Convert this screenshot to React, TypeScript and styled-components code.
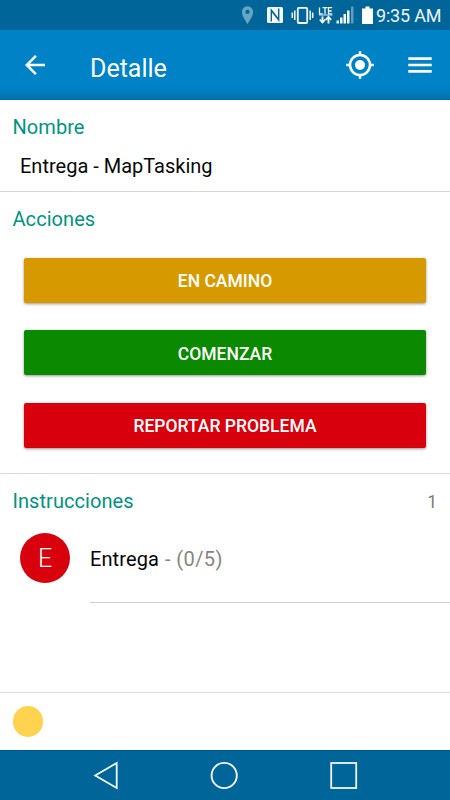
import React from 'react';
import styled, { createGlobalStyle } from 'styled-components';

const GlobalStyle = createGlobalStyle`
  * { box-sizing: border-box; }
  body { margin: 0; background: #fff; font-family: Roboto, sans-serif; }
  svg { display: block; flex: none; }
`;

const Screen = styled.div`
  display: flex;
  flex-direction: column;
  width: 450px;
  height: 800px;
  overflow: hidden;
  background: #fff;
`;

const StatusBar = styled.div`
  display: flex;
  align-items: center;
  justify-content: flex-end;
  height: 30px;
  padding-right: 9px;
  background: #006699;
  color: #eef5fa;
`;

const Clock = styled.time`
  width: 65px;
  margin-left: 2px;
  padding-top: 2px;
  font-size: 18px;
  line-height: 30px;
  letter-spacing: -0.2px;
  white-space: nowrap;
`;

const AppBar = styled.header`
  display: flex;
  align-items: center;
  height: 70px;
  padding: 0 15px 0 20px;
  background: linear-gradient(#0082c6 0, #0082c6 55px, #007dbd 63px, #006fa8 70px);
  color: #fff;
`;

const IconButton = styled.button`
  display: flex;
  padding: 0;
  border: 0;
  background: none;
  color: inherit;
`;

const Title = styled.h1`
  flex: 1;
  margin: 0 0 0 40px;
  padding-top: 8px;
  font-size: 25px;
  font-weight: 400;
  line-height: 30px;
`;

const Actions = styled.div`
  display: flex;
  gap: 30px;
`;

const Section = styled.section<{ $height: number }>`
  height: ${(p) => p.$height}px;
  border-bottom: 1px solid #d6d6d6;
`;

const SectionHeader = styled.div`
  display: flex;
  justify-content: space-between;
  align-items: center;
  height: 27px;
  margin-top: 14px;
  padding: 0 13px 0 12.5px;
`;

const SectionTitle = styled.h2`
  margin: 0;
  color: #009480;
  font-size: 20px;
  font-weight: 400;
  line-height: 27px;
  letter-spacing: 0.06px;
`;

const Count = styled.span`
  color: #7c7c7c;
  font-size: 17.5px;
  line-height: 27px;
  padding-top: 1px;
`;

const TaskName = styled.div`
  margin-top: 11px;
  padding-left: 20px;
  color: #080808;
  font-size: 20px;
  line-height: 28px;
`;

const ButtonList = styled.div`
  display: flex;
  flex-direction: column;
  gap: 27.5px;
  padding: 24.500px 24px 0;
`;

const ActionButton = styled.button<{ $color: string }>`
  height: 45px;
  padding: 2px 0 0;
  border: 0;
  border-radius: 2px;
  background: ${(p) => p.$color};
  box-shadow: 0 1px 3px rgba(0, 0, 0, 0.42);
  color: #fff;
  font-family: inherit;
  font-size: 17.5px;
  font-weight: 500;
  line-height: 22px;
`;

const Instructions = styled.section`
  flex: 1;
`;

const InstructionRow = styled.div`
  display: flex;
  height: 88px;
  padding-left: 20px;
`;

const Avatar = styled.div`
  display: flex;
  align-items: center;
  justify-content: center;
  width: 50px;
  height: 50px;
  margin: 18px 20px 0 0;
  border-radius: 50%;
  background: #d9000d;
  color: #fff;
  font-size: 25px;
  font-weight: 300;
`;

const InstructionText = styled.div`
  flex: 1;
  padding-top: 30px;
  border-bottom: 1px solid #cfcfcf;
  color: #050505;
  font-size: 20px;
  line-height: 28px;
  letter-spacing: 0.1px;
`;

const Muted = styled.span`
  margin-left: 1px;
  color: #858585;
  letter-spacing: 0.4px;
`;

const Footer = styled.footer`
  height: 58px;
  padding: 13px 12.5px;
  border-top: 1px solid #dcdcdc;
`;

const StatusDot = styled.div`
  width: 30.5px;
  height: 30.5px;
  border-radius: 50%;
  background: #ffd350;
`;

const NavBar = styled.nav`
  display: flex;
  justify-content: space-between;
  align-items: center;
  height: 50px;
  padding: 0 92px;
  border-top: 1px solid #00558d;
  background: #006699;
  color: #f2f7fa;
`;

const StatusIcons = () => (
  <svg width="134" height="30" viewBox="240 0 134 30" fill="none">
    <path d="M247.500 6.200a5.600 5.600 0 0 0-5.600 5.700c0 4.300 5.600 12 5.600 12s5.600-7.700 5.600-12a5.600 5.600 0 0 0-5.600-5.700Zm0 3.600a2.100 2.100 0 1 1 0 4.200a2.100 2.100 0 0 1 0-4.200Z" fill="#68a5c5" fillRule="evenodd" />
    <rect x="267" y="7" width="16" height="16" rx="1.500" fill="#f7fbfd" />
    <path d="M271.300 21.500v-11.500l7.400 9.500M278.700 8.500v11.500l-7.400-9.500" stroke="#006699" strokeWidth="1.400" />
    <g stroke="#f4f8fb" strokeWidth="1.500">
      <rect x="297.800" y="7.800" width="9.400" height="15.200" rx="1" strokeWidth="1.800" />
      <path d="M294.800 10.500v9.500M310.200 10.500v9.500M292.300 12.500v5.500M312.700 12.500v5.500" />
    </g>
    <g stroke="#f4f8fb" strokeWidth="1.300">
      <path d="M319.500 7.500v6.300h3.300M322.500 7.700h5M325 7.700v6.600M332.200 7.700h-3.700v6.100h3.700M328.500 11h3.200" />
      <path d="M319 15h13.500" strokeWidth=".9" />
      <path d="M322.500 23v-6.500M328.500 17v6.500" strokeWidth="1.900" />
      <path d="m319.800 19.500 2.700 3 2.700-3M325.800 19.800l2.700-3 2.700 3" strokeWidth="1.800" />
    </g>
    <path d="M336.500 20.500h2.500v3h-2.500zM340 17.500h2.500v6H340zM343.500 14h2.500v9.500h-2.500zM347 10.500h2.500v13H347z" fill="#f7fbfd" />
    <path d="M351 6.500h2.500v17H351z" fill="#5f9ec0" />
    <path d="M362 8.500h3.500v-2h4v2h3.500V24h-11z" fill="#fff" />
  </svg>
);

const BackArrow = () => (
  <svg width="30" height="30" viewBox="0 0 24 24" fill="currentColor">
    <path d="M20 11H7.830l5.590-5.590L12 4l-8 8 8 8 1.410-1.410L7.830 13H20v-2z" />
  </svg>
);

const LocateIcon = () => (
  <svg width="30" height="30" viewBox="0 0 30 30" fill="none" stroke="currentColor" strokeWidth="2.500">
    <circle cx="15" cy="15" r="10" />
    <circle cx="15" cy="15" r="5" fill="currentColor" stroke="none" />
    <path d="M15 1.200V5M15 25v3.800M1.200 15H5M25 15h3.800" />
  </svg>
);

const MenuIcon = () => (
  <svg width="30" height="30" viewBox="0 0 30 30" fill="currentColor">
    <path d="M3.300 7.200h23.400v2.700H3.300zM3.300 13.650h23.400v2.700H3.300zM3.300 20.100h23.400v2.700H3.300z" />
  </svg>
);

const NavTriangle = () => (
  <svg width="28" height="30" viewBox="0 0 28 30" fill="none" stroke="currentColor" strokeWidth="1.800">
    <path d="M3.200 14.500 24.700 2v25z" />
  </svg>
);

const NavCircle = () => (
  <svg width="30" height="30" viewBox="0 0 30 30" fill="none" stroke="currentColor" strokeWidth="1.900">
    <circle cx="15.200" cy="14.500" r="12.600" />
  </svg>
);

const NavSquare = () => (
  <svg width="30" height="30" viewBox="0 0 30 30" fill="none" stroke="currentColor" strokeWidth="1.800">
    <rect x="3.200" y="2" width="25" height="25" />
  </svg>
);

const taskActions = [
  { label: 'EN CAMINO', color: '#d69a00' },
  { label: 'COMENZAR', color: '#0b8900' },
  { label: 'REPORTAR PROBLEMA', color: '#d9000d' },
];

export default function App() {
  return (
    <>
      <GlobalStyle />
      <Screen>
        <StatusBar>
          <StatusIcons />
          <Clock>9:35 AM</Clock>
        </StatusBar>
        <AppBar>
          <IconButton aria-label="Volver"><BackArrow /></IconButton>
          <Title>Detalle</Title>
          <Actions>
            <IconButton aria-label="Ubicación"><LocateIcon /></IconButton>
            <IconButton aria-label="Menú"><MenuIcon /></IconButton>
          </Actions>
        </AppBar>
        <Section $height={92}>
          <SectionHeader><SectionTitle>Nombre</SectionTitle></SectionHeader>
          <TaskName>Entrega - MapTasking</TaskName>
        </Section>
        <Section $height={282}>
          <SectionHeader><SectionTitle>Acciones</SectionTitle></SectionHeader>
          <ButtonList>
            {taskActions.map((a) => (
              <ActionButton key={a.label} $color={a.color}>{a.label}</ActionButton>
            ))}
          </ButtonList>
        </Section>
        <Instructions>
          <SectionHeader>
            <SectionTitle>Instrucciones</SectionTitle>
            <Count>1</Count>
          </SectionHeader>
          <InstructionRow>
            <Avatar>E</Avatar>
            <InstructionText>Entrega <Muted>- (0/5)</Muted></InstructionText>
          </InstructionRow>
        </Instructions>
        <Footer><StatusDot /></Footer>
        <NavBar>
          <IconButton aria-label="Atrás"><NavTriangle /></IconButton>
          <IconButton aria-label="Inicio"><NavCircle /></IconButton>
          <IconButton aria-label="Recientes"><NavSquare /></IconButton>
        </NavBar>
      </Screen>
    </>
  );
}
